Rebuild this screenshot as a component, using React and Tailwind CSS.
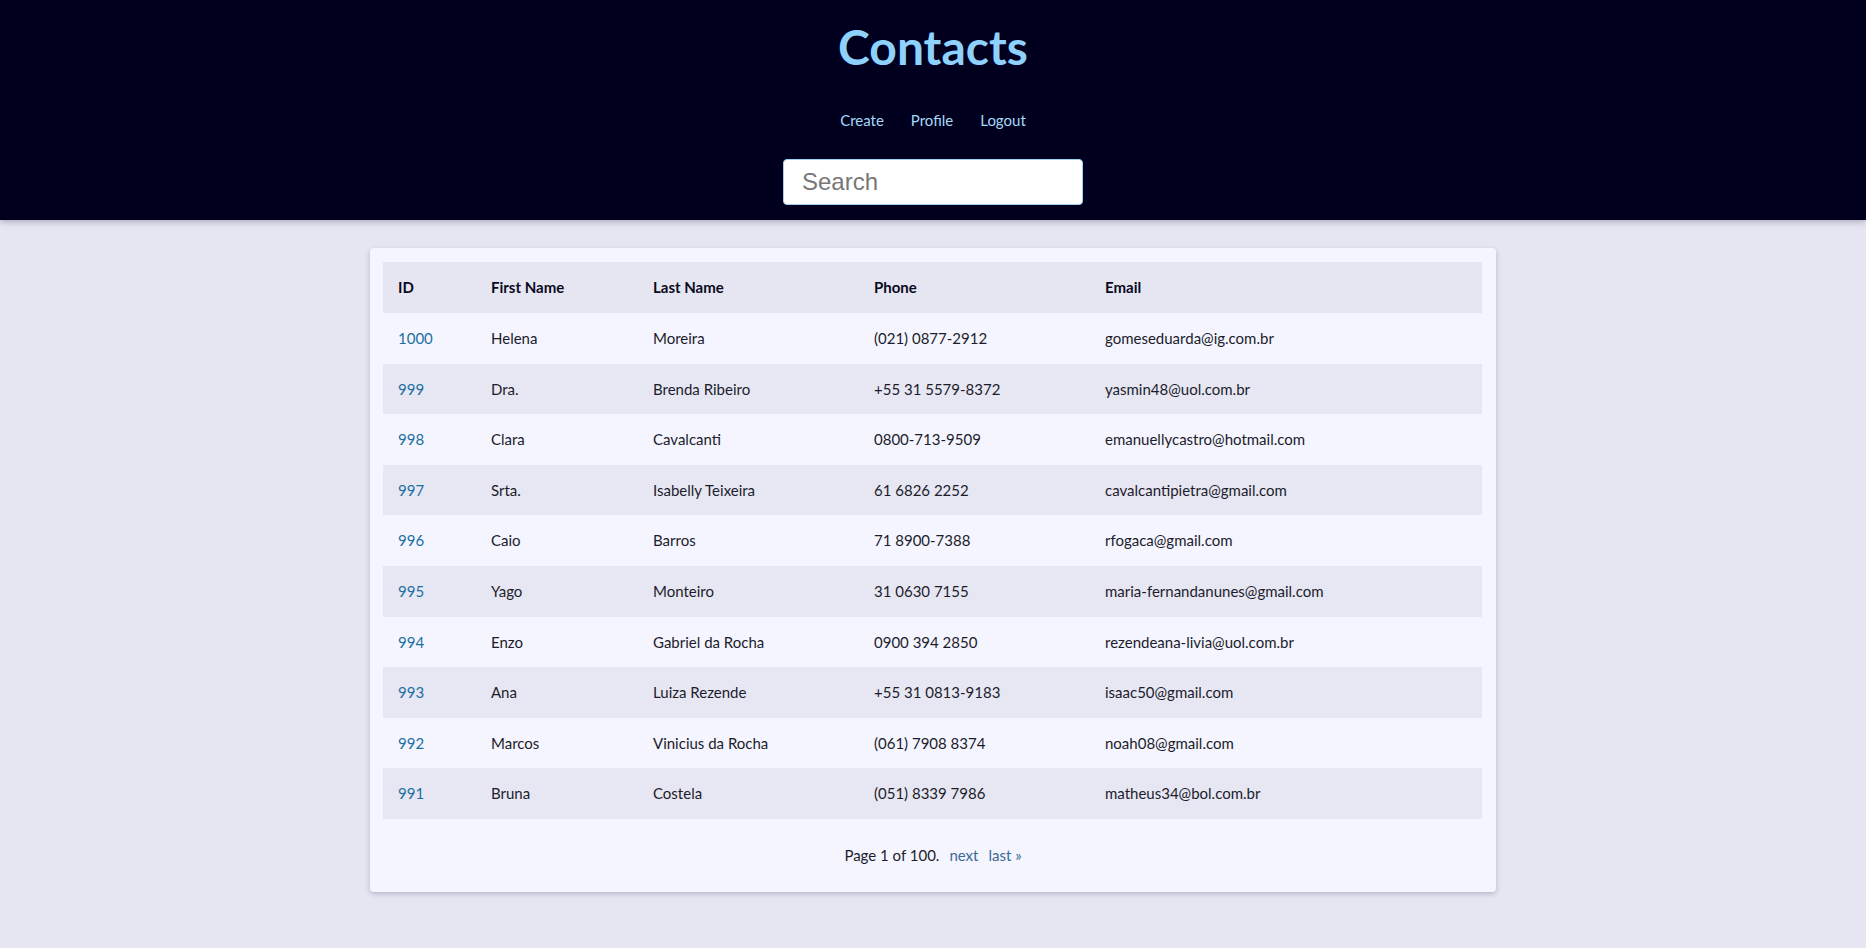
import React from "react";

const rows = [
  ["1000", "Helena", "Moreira", "(021) 0877-2912", "gomeseduarda@ig.com.br"],
  ["999", "Dra.", "Brenda Ribeiro", "+55 31 5579-8372", "yasmin48@uol.com.br"],
  ["998", "Clara", "Cavalcanti", "0800-713-9509", "emanuellycastro@hotmail.com"],
  ["997", "Srta.", "Isabelly Teixeira", "61 6826 2252", "cavalcantipietra@gmail.com"],
  ["996", "Caio", "Barros", "71 8900-7388", "rfogaca@gmail.com"],
  ["995", "Yago", "Monteiro", "31 0630 7155", "maria-fernandanunes@gmail.com"],
  ["994", "Enzo", "Gabriel da Rocha", "0900 394 2850", "rezendeana-livia@uol.com.br"],
  ["993", "Ana", "Luiza Rezende", "+55 31 0813-9183", "isaac50@gmail.com"],
  ["992", "Marcos", "Vinicius da Rocha", "(061) 7908 8374", "noah08@gmail.com"],
  ["991", "Bruna", "Costela", "(051) 8339 7986", "matheus34@bol.com.br"],
];

export default function App() {
  return (
    <div
      className="min-h-[948px] bg-[#e6e6f2] text-[#1c1c2c]"
      style={{ fontFamily: "'Segoe UI', Lato, 'Noto Sans', sans-serif" }}
    >
      <header className="relative z-10 h-[220px] bg-[#00001e] flex flex-col items-center shadow-[0_2px_6px_rgba(0,0,40,0.25)]">
        <h1 className="mt-[16px] h-[62px] leading-[62px] text-[48px] font-bold text-[#8ed1fc]">
          Contacts
        </h1>
        <nav className="mt-[30px] h-[24px] flex items-center gap-[27px] text-[15px] leading-[24px] text-[#a6d8f8]">
          <a href="#">Create</a>
          <a href="#">Profile</a>
          <a href="#">Logout</a>
        </nav>
        <input
          placeholder="Search"
          className="mt-[27px] w-[300px] h-[46px] rounded-[4px] border border-[#9fd0f0] bg-white px-[18px] text-[24px] text-[#333] placeholder:text-[#777] outline-none"
          style={{ fontFamily: "'Liberation Sans', Arial, sans-serif" }}
        />
      </header>

      <main className="flex justify-center pt-[28px]">
        <div className="w-[1126px] bg-[#f4f5fe] rounded-[4px] shadow-[0_2px_5px_rgba(40,40,80,0.25)] px-[13px] pt-[14px]">
          <table className="w-[1099px] border-collapse text-[15px] table-fixed">
            <colgroup>
              <col className="w-[93px]" />
              <col className="w-[162px]" />
              <col className="w-[221px]" />
              <col className="w-[231px]" />
              <col />
            </colgroup>
            <thead>
              <tr className="bg-[#e6e6f2] h-[51px]">
                {["ID", "First Name", "Last Name", "Phone", "Email"].map((h) => (
                  <th key={h} className="text-left font-bold px-[15px] text-[#0a0a1e]">
                    {h}
                  </th>
                ))}
              </tr>
            </thead>
            <tbody>
              {rows.map((r, i) => (
                <tr
                  key={r[0]}
                  className={i % 2 === 0 ? "h-[50.6px] bg-[#f4f5fe]" : "h-[50.6px] bg-[#e7e7f3]"}
                >
                  <td className="px-[15px] text-[#1d6fa1]">
                    <a href="#">{r[0]}</a>
                  </td>
                  <td className="px-[15px]">{r[1]}</td>
                  <td className="px-[15px]">{r[2]}</td>
                  <td className="px-[15px]">{r[3]}</td>
                  <td className="px-[15px]">{r[4]}</td>
                </tr>
              ))}
            </tbody>
          </table>
          <div className="h-[73px] flex items-center justify-center text-[15px]">
            <span>Page 1 of 100.</span>
            <a href="#" className="ml-[10px] text-[#3a6a96]">next</a>
            <a href="#" className="ml-[10px] text-[#3a6a96]">last »</a>
          </div>
        </div>
      </main>
    </div>
  );
}
